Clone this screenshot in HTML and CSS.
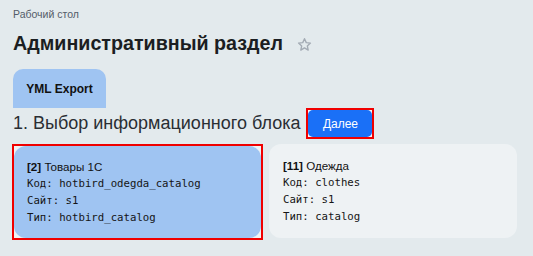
FILE: index.html
```html
<!DOCTYPE html>
<html lang="ru">
<head>
<meta charset="utf-8">
<title>Административный раздел</title>
<link rel="stylesheet" href="styles.css">
</head>
<body>
<div class="page">
  <div class="crumbs">Рабочий стол</div>
  <div class="title-row">
    <h1 class="title">Административный раздел</h1>
    <svg class="star" width="15" height="15" viewBox="0 0 24 24" fill="none" stroke="#a3abb4" stroke-width="2.2" stroke-linejoin="round"><path d="M12 2.8l2.8 6.2 6.7.7-5 4.6 1.4 6.6L12 17.5l-5.9 3.4 1.4-6.6-5-4.6 6.7-.7z"/></svg>
  </div>
  <div class="tabs"><div class="tab">YML Export</div></div>
  <div class="step-row">
    <span class="step">1. Выбор информационного блока</span>
    <span class="hl hl-btn"><button class="btn">Далее</button></span>
  </div>
  <div class="cards">
    <div class="hl hl-card">
      <div class="card card-active">
        <div class="card-name"><b>[2]</b> Товары 1С</div>
        <div class="mono">Код: hotbird_odegda_catalog</div>
        <div class="mono">Сайт: s1</div>
        <div class="mono">Тип: hotbird_catalog</div>
      </div>
    </div>
    <div class="card">
      <div class="card-name"><b>[11]</b> Одежда</div>
      <div class="mono">Код: clothes</div>
      <div class="mono">Сайт: s1</div>
      <div class="mono">Тип: catalog</div>
    </div>
  </div>
</div>
</body>
</html>
```
FILE: styles.css
```css
html, body {
  margin: 0;
  padding: 0;
}
body {
  background: #e3eaed;
  font-family: "Liberation Sans", Arial, sans-serif;
  color: #1f2329;
  width: 533px;
  height: 256px;
  overflow: hidden;
}
.page {
  padding: 7px 16px 0 13px;
}
.crumbs {
  font-size: 10.5px;
  color: #535c69;
  line-height: 14px;
}
.title-row {
  display: flex;
  align-items: center;
  gap: 14px;
  margin-top: 9px;
  height: 26px;
}
.title {
  margin: 0;
  font-size: 19.7px;
  font-weight: bold;
  color: #1b1e22;
  line-height: 26px;
}
.star {
  margin-top: 2px;
}
.tabs {
  display: flex;
  margin-top: 13px;
}
.tab {
  background: #9fc4f2;
  border-radius: 10px 10px 0 0;
  width: 93px;
  height: 39px;
  display: flex;
  align-items: center;
  justify-content: center;
  font-size: 12px;
  font-weight: bold;
  color: #111;
}
.step-row {
  display: flex;
  align-items: center;
  gap: 6px;
}
.step {
  font-size: 18px;
  color: #2a2e33;
  line-height: 31px;
}
.hl {
  display: block;
  border: 2px solid #f00000;
  background: #eef3f5;
}
.hl-btn {
  display: flex;
  background: #f4f8fa;
}
.btn {
  width: 64px;
  height: 27px;
  border: none;
  border-radius: 5px;
  background: #1a70f7;
  color: #fff;
  font-family: "Liberation Sans", Arial, sans-serif;
  font-size: 12px;
  padding: 0;
}
.cards {
  display: grid;
  grid-template-columns: 251px 248px;
  gap: 6px;
  margin-top: 5px;
  margin-left: -1px;
}
.card {
  background: #eef2f4;
  border-radius: 12px;
  height: 94px;
  box-sizing: border-box;
  padding: 13px 0 0 14px;
}
.hl-card .card {
  height: 92px;
  padding: 12px 0 0 13px;
}
.card-active {
  background: #9fc4f2;
}
.card-name {
  font-size: 11.6px;
  line-height: 17px;
  color: #111;
}
.mono {
  font-family: "DejaVu Sans Mono", "Liberation Mono", monospace;
  font-size: 10.7px;
  line-height: 17px;
  color: #151515;
}
```
